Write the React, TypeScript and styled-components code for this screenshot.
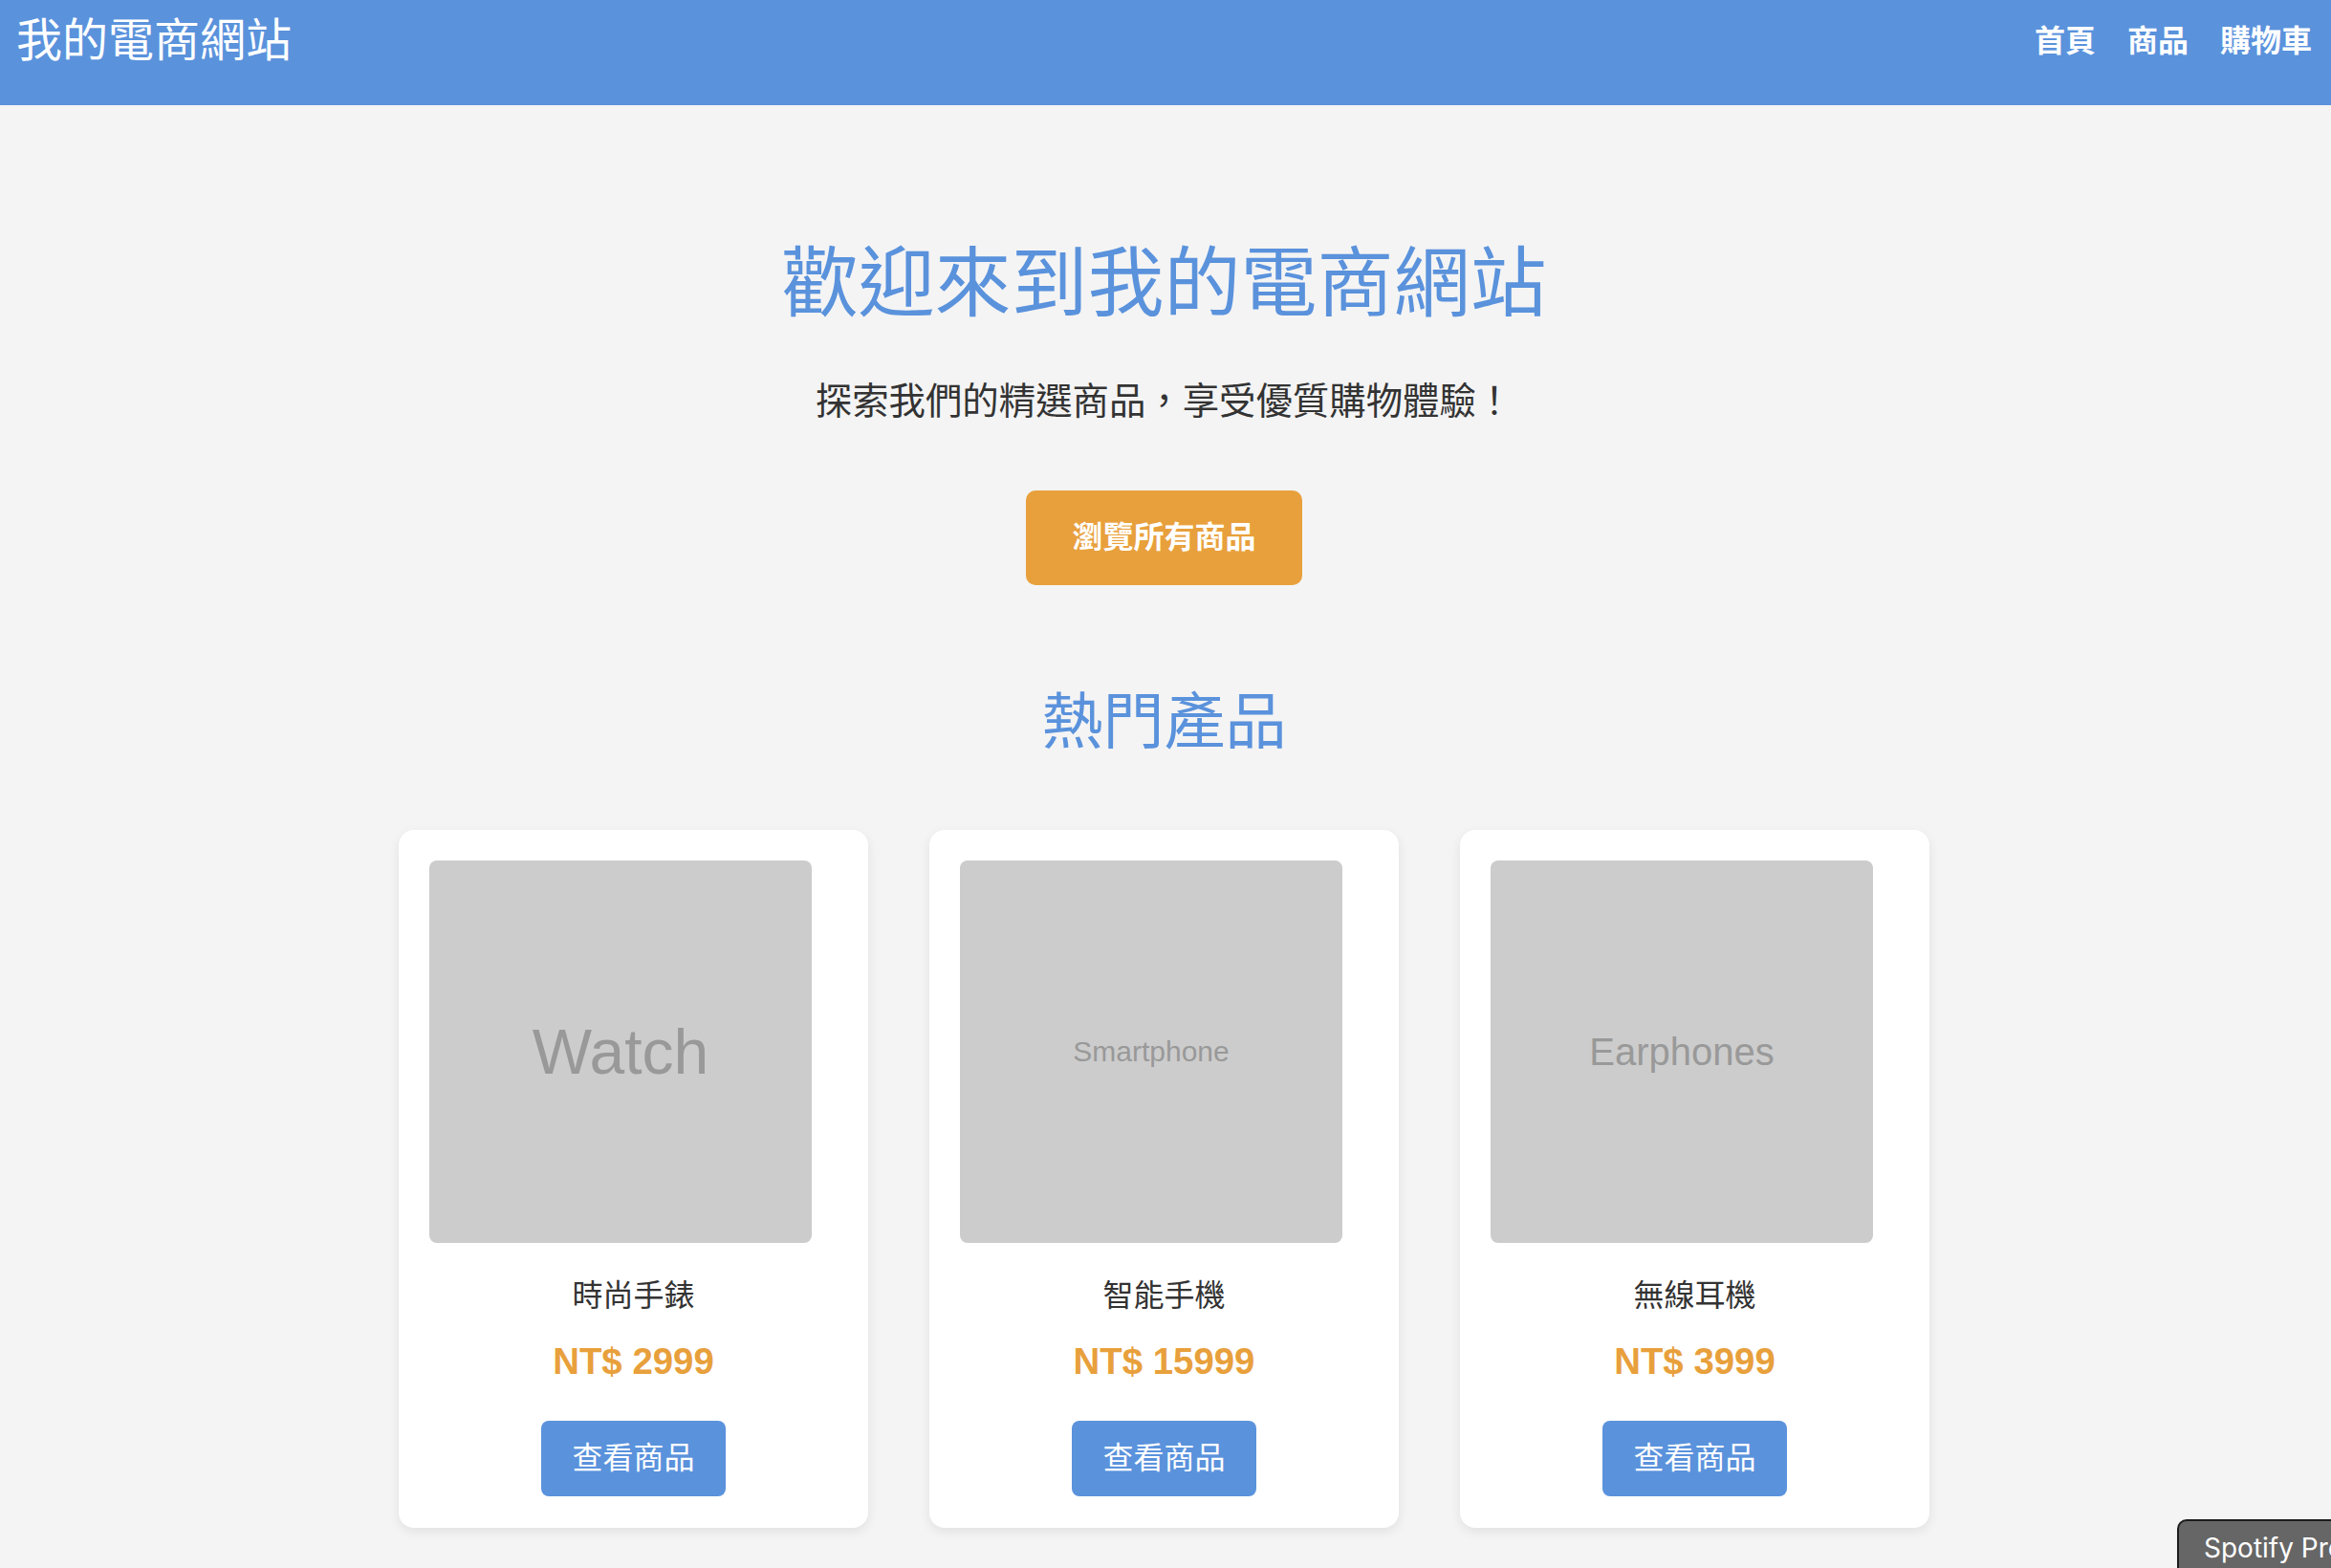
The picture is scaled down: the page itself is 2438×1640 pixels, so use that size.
import React from "react";
import styled, { createGlobalStyle } from "styled-components";

const FONT = `"Liberation Sans", "Noto Sans CJK TC", sans-serif`;
const BLUE = "#5a92dc";
const ORANGE = "#e8a03c";

const GlobalStyle = createGlobalStyle`
  html, body {
    margin: 0;
    padding: 0;
    background: #f4f4f4;
    overflow-x: hidden;
  }
  body {
    font-family: ${FONT};
    color: #333;
  }
  * { box-sizing: border-box; }
`;

const Header = styled.header`
  height: 110px;
  background: ${BLUE};
  display: flex;
  align-items: center;
  justify-content: space-between;
  padding: 0 20px 25px 17px;
`;

const Logo = styled.div`
  font-size: 48px;
  line-height: 56px;
  color: #fff;
  font-weight: 400;
`;

const Nav = styled.nav`
  display: flex;
  gap: 33px;
`;

const NavLink = styled.a`
  font-size: 32px;
  line-height: 40px;
  font-weight: 700;
  color: #fff;
  text-decoration: none;
`;

const Main = styled.main`
  display: flex;
  flex-direction: column;
  align-items: center;
  padding: 139px 3px 38px 0;
`;

const HeroTitle = styled.h1`
  margin: 0;
  font-size: 80px;
  line-height: 96px;
  font-weight: 400;
  color: ${BLUE};
`;

const HeroSub = styled.p`
  margin: 52px 0 0;
  font-size: 38.4px;
  line-height: 46px;
  color: #333;
`;

const CtaButton = styled.button`
  margin-top: 70px;
  font-family: ${FONT};
  font-size: 32px;
  line-height: 39px;
  font-weight: 700;
  color: #fff;
  background: ${ORANGE};
  border: none;
  border-radius: 10px;
  padding: 30px 48px;
  cursor: pointer;
`;

const SectionTitle = styled.h2`
  margin: 105px 0 0;
  font-size: 64px;
  line-height: 76px;
  font-weight: 400;
  color: ${BLUE};
`;

const Grid = styled.div`
  margin-top: 75px;
  display: grid;
  grid-template-columns: repeat(3, 491px);
  gap: 64px;
  justify-content: center;
`;

const Card = styled.div`
  background: #fff;
  border-radius: 16px;
  box-shadow: 0 4px 12px rgba(0, 0, 0, 0.08);
  padding: 32px 32px 33px;
  text-align: center;
`;

const Placeholder = styled.div<{ $size: number }>`
  width: 400px;
  height: 400px;
  background: #cccccc;
  border-radius: 8px;
  display: flex;
  align-items: center;
  justify-content: center;
  font-family: "Liberation Sans", sans-serif;
  font-size: ${(p) => p.$size}px;
  color: #999;
`;

const ProductName = styled.h3`
  margin: 35px 0 0;
  font-size: 32px;
  line-height: 40px;
  font-weight: 400;
  color: #333;
`;

const Price = styled.p`
  margin: 27px 0 0;
  font-size: 38.4px;
  line-height: 44px;
  font-weight: 700;
  color: ${ORANGE};
`;

const ViewButton = styled.button`
  margin-top: 40px;
  font-family: ${FONT};
  font-size: 32px;
  line-height: 39px;
  font-weight: 400;
  color: #fff;
  background: ${BLUE};
  border: none;
  border-radius: 8px;
  padding: 20px 32px;
  cursor: pointer;
`;

const SpotifyBadge = styled.div`
  position: fixed;
  left: 2277px;
  top: 1589px;
  height: 70px;
  padding: 8px 26px 0;
  background: #666;
  border: 2px solid #1c1c1c;
  border-radius: 10px;
  color: #fff;
  font-family: Inter, "Liberation Sans", sans-serif;
  font-size: 28px;
  line-height: 40px;
  white-space: nowrap;
`;

const products = [
  { label: "Watch", size: 66, name: "時尚手錶", price: "NT$ 2999" },
  { label: "Smartphone", size: 30, name: "智能手機", price: "NT$ 15999" },
  { label: "Earphones", size: 40, name: "無線耳機", price: "NT$ 3999" },
];

export default function App() {
  return (
    <>
      <GlobalStyle />
      <Header>
        <Logo>我的電商網站</Logo>
        <Nav>
          <NavLink href="#">首頁</NavLink>
          <NavLink href="#">商品</NavLink>
          <NavLink href="#">購物車</NavLink>
        </Nav>
      </Header>
      <Main>
        <HeroTitle>歡迎來到我的電商網站</HeroTitle>
        <HeroSub>探索我們的精選商品，享受優質購物體驗！</HeroSub>
        <CtaButton>瀏覽所有商品</CtaButton>
        <SectionTitle>熱門產品</SectionTitle>
        <Grid>
          {products.map((p) => (
            <Card key={p.name}>
              <Placeholder $size={p.size}>{p.label}</Placeholder>
              <ProductName>{p.name}</ProductName>
              <Price>{p.price}</Price>
              <ViewButton>查看商品</ViewButton>
            </Card>
          ))}
        </Grid>
      </Main>
      <SpotifyBadge>Spotify Premium</SpotifyBadge>
    </>
  );
}
